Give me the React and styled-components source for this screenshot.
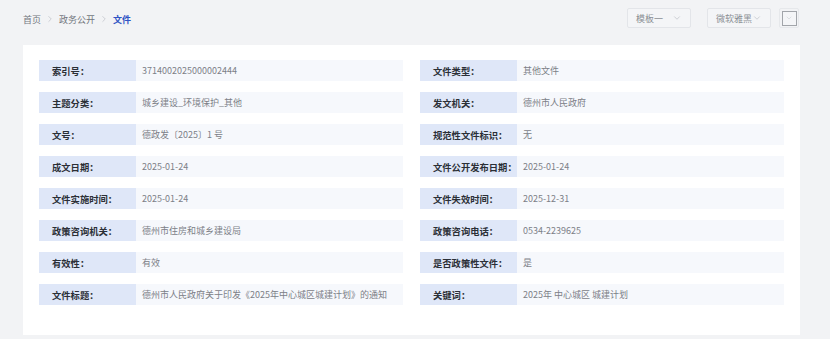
import React from "react";
import styled, { createGlobalStyle } from "styled-components";
import { ChevronDown, ChevronRight } from "lucide-react";

const GlobalStyle = createGlobalStyle`
  body {
    margin: 0;
    background: #f2f3f5;
    font-family: "Noto Sans CJK SC", "Noto Sans", sans-serif;
  }
`;

const fields = [
  ["索引号：", "3714002025000002444"],
  ["文件类型：", "其他文件"],
  ["主题分类：", "城乡建设_环境保护_其他"],
  ["发文机关：", "德州市人民政府"],
  ["文号：", "德政发〔2025〕1 号"],
  ["规范性文件标识：", "无"],
  ["成文日期：", "2025-01-24"],
  ["文件公开发布日期：", "2025-01-24"],
  ["文件实施时间：", "2025-01-24"],
  ["文件失效时间：", "2025-12-31"],
  ["政策咨询机关：", "德州市住房和城乡建设局"],
  ["政策咨询电话：", "0534-2239625"],
  ["有效性：", "有效"],
  ["是否政策性文件：", "是"],
  ["文件标题：", "德州市人民政府关于印发《2025年中心城区城建计划》的通知"],
  ["关键词：", "2025年 中心城区 城建计划"],
];

const App = () => {
  return (
    <Page>
      <GlobalStyle />
      <TopBar>
        <Crumbs>
          <span>首页</span>
          <ChevronRight size={10} color="#c5c8ce" />
          <span>政务公开</span>
          <ChevronRight size={10} color="#c5c8ce" />
          <Current>文件</Current>
        </Crumbs>
        <Tools>
          <Select $width={64}>
            <span>模板一</span>
            <ChevronDown size={10} color="#c5c8ce" />
          </Select>
          <Select $width={64}>
            <span>微软雅黑</span>
            <ChevronDown size={10} color="#c5c8ce" />
          </Select>
          <Swatch>
            <div className="inner">
              <ChevronDown size={8} color="#d0d3d8" />
            </div>
          </Swatch>
        </Tools>
      </TopBar>
      <Card>
        <Grid>
          {fields.map(([label, value]) => (
            <Field key={label}>
              <Label>{label}</Label>
              <Value>{value}</Value>
            </Field>
          ))}
        </Grid>
      </Card>
    </Page>
  );
};

const Page = styled.div`
  width: 830px;
  padding: 0 30px 0 23px;
  box-sizing: border-box;
`;

const TopBar = styled.div`
  height: 45px;
  box-sizing: border-box;
  padding-top: 8px;
  display: flex;
  justify-content: space-between;
  align-items: flex-start;
`;

const Crumbs = styled.div`
  display: flex;
  align-items: center;
  gap: 4px;
  height: 22px;
  font-size: 9px;
  color: #73777e;
`;

const Current = styled.span`
  color: #2f54c4;
  font-weight: bold;
`;

const Tools = styled.div`
  display: flex;
  align-items: center;
  gap: 8px;
  margin-right: 1px;
  & > :first-child {
    margin-right: 8px;
  }
`;

const Select = styled.div`
  width: ${(p) => p.$width}px;
  height: 20px;
  box-sizing: border-box;
  border: 1px solid #e3e5e9;
  border-radius: 2px;
  background: #f4f5f7;
  display: flex;
  align-items: center;
  justify-content: space-between;
  padding: 0 8px;
  font-size: 9px;
  color: #8a8e94;
`;

const Swatch = styled.div`
  width: 20px;
  height: 20px;
  box-sizing: border-box;
  border: 1px solid #e6e8eb;
  border-radius: 2px;
  display: flex;
  align-items: center;
  justify-content: center;
  .inner {
    width: 15px;
    height: 15px;
    box-sizing: border-box;
    border: 1px solid #a2a5aa;
    background: #f4f5f7;
    display: flex;
    align-items: center;
    justify-content: center;
  }
`;

const Card = styled.div`
  background: #fff;
  padding: 15px 16px 30px;
`;

const Grid = styled.div`
  display: grid;
  grid-template-columns: 1fr 1fr;
  column-gap: 17px;
  row-gap: 11px;
`;

const Field = styled.div`
  display: flex;
  height: 21px;
`;

const Label = styled.div`
  width: 97px;
  flex-shrink: 0;
  background: #dfe7f8;
  color: #2b2f36;
  font-size: 9.3px;
  font-weight: bold;
  display: flex;
  align-items: center;
  padding-left: 13px;
  box-sizing: border-box;
  white-space: nowrap;
`;

const Value = styled.div`
  flex: 1;
  background: #f6f8fc;
  color: #7c8087;
  font-size: 9px;
  display: flex;
  align-items: center;
  padding-left: 6px;
  white-space: nowrap;
`;

export default App;
